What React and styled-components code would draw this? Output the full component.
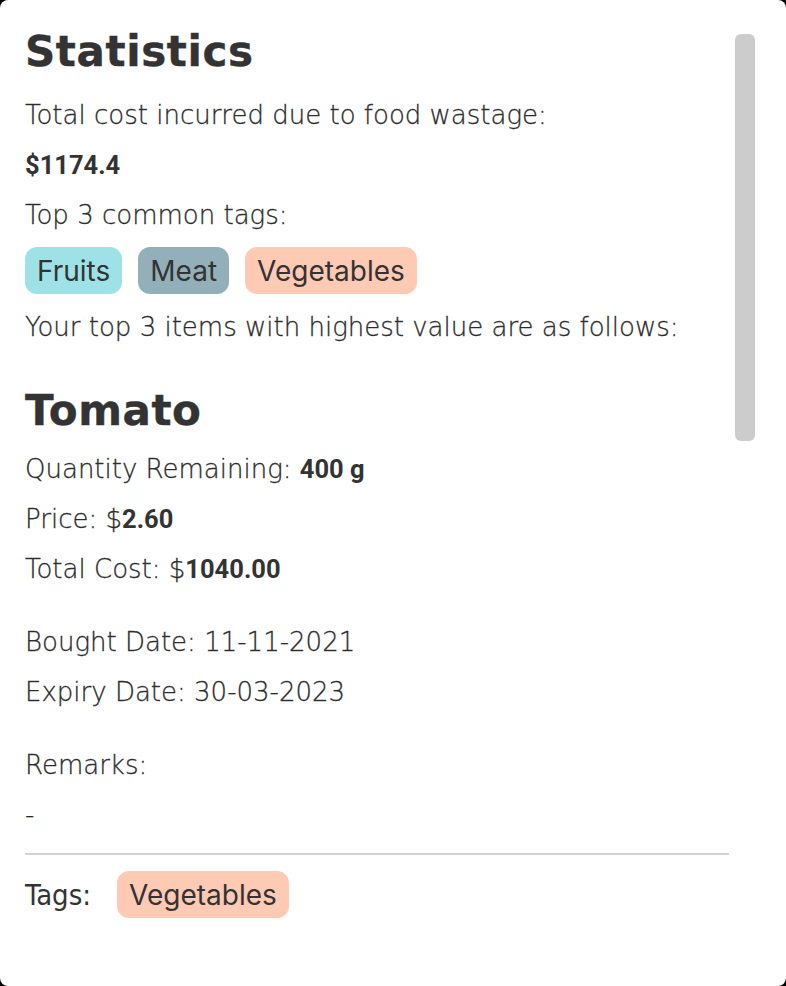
import React from 'react'
import styled, { createGlobalStyle } from 'styled-components'

const GlobalStyle = createGlobalStyle`
  html, body {
    margin: 0;
    padding: 0;
    background: #000;
  }
  * { box-sizing: border-box; }
`

const tagColors = {
  Fruits: '#9ee2e8',
  Meat: '#93b0ba',
  Vegetables: '#ffcab3',
}

const topItem = {
  name: 'Tomato',
  quantity: '400 g',
  price: '2.60',
  total: '1040.00',
  bought: '11-11-2021',
  expiry: '30-03-2023',
  remarks: '-',
  tags: ['Vegetables'],
}

const Item = ({ item }) => (
  <ItemBlock>
    <Heading tight>{item.name}</Heading>
    <Line>Quantity Remaining: <Value>{item.quantity}</Value></Line>
    <Line>Price: $<Value>{item.price}</Value></Line>
    <Line>Total Cost: $<Value>{item.total}</Value></Line>
    <Group>
      <Line>Bought Date: {item.bought}</Line>
      <Line>Expiry Date: {item.expiry}</Line>
    </Group>
    <Group>
      <Line>Remarks:</Line>
      <Line>{item.remarks}</Line>
    </Group>
    <Divider />
    <TagRow>
      <TagLabel>Tags:</TagLabel>
      {item.tags.map((t) => (
        <Tag key={t} color={tagColors[t]}>{t}</Tag>
      ))}
    </TagRow>
  </ItemBlock>
)

const App = () => {
  return (
    <>
      <GlobalStyle />
      <Panel>
        <Content>
          <Heading>Statistics</Heading>
          <Line>Total cost incurred due to food wastage:</Line>
          <Line><Value>$1174.4</Value></Line>
          <Line>Top 3 common tags:</Line>
          <Tags>
            <Tag color={tagColors.Fruits}>Fruits</Tag>
            <Tag color={tagColors.Meat}>Meat</Tag>
            <Tag color={tagColors.Vegetables}>Vegetables</Tag>
          </Tags>
          <Line>Your top 3 items with highest value are as follows:</Line>
          <Item item={topItem} />
        </Content>
        <ScrollThumb />
      </Panel>
    </>
  )
}

export default App

const Panel = styled.div`
  position: relative;
  height: 986px;
  width: 786px;
  background: #fff;
  border-radius: 8px;
  overflow: hidden;
`
const ScrollThumb = styled.div`
  position: absolute;
  top: 34px;
  right: 31px;
  width: 20px;
  height: 407px;
  background: #cccccc;
  border-radius: 6px;
`
const Content = styled.div`
  width: 729px;
  padding: 20px 0 0 25px;
  color: #2a2a2a;
  font-family: "DejaVu Sans", sans-serif;
  font-weight: 200;
  -webkit-text-stroke: 0.3px #333;
`
const Heading = styled.h1`
  margin: 0 0 ${(p) => (p.tight ? '1px' : '6px')} 0;
  font-size: 42px;
  line-height: 64px;
  font-weight: 700;
  letter-spacing: 0.6px;
  color: #333;
  -webkit-text-stroke: 0.4px #333;
`
const Line = styled.div`
  font-size: 26px;
  line-height: 50px;
  height: 50px;
  white-space: nowrap;
`
const Value = styled.b`
  font-family: Roboto, sans-serif;
  font-weight: 700;
  font-size: 25.5px;
  line-height: 1;
  color: #333;
  -webkit-text-stroke: 0;
`
const Tags = styled.div`
  display: flex;
  gap: 16px;
  margin: 7px 0 8px 0;
`
const Tag = styled.span`
  display: inline-flex;
  align-items: center;
  height: 47px;
  padding: 0 12px;
  border-radius: 12px;
  background: ${(p) => p.color};
  font-family: Inter, sans-serif;
  font-weight: 400;
  font-size: 28px;
  color: #333;
  -webkit-text-stroke: 0;
`
const ItemBlock = styled.div`
  margin-top: 27px;
`
const Group = styled.div`
  margin-top: 23px;
`
const Divider = styled.hr`
  margin: 13px 0 16px 0;
  border: none;
  border-top: 2px solid #d3d3d3;
`
const TagRow = styled.div`
  display: flex;
  align-items: center;
  gap: 26px;
`
const TagLabel = styled.span`
  font-family: "Liberation Sans Narrow", "DejaVu Sans Condensed", sans-serif;
  font-weight: 400;
  font-size: 29px;
  -webkit-text-stroke: 0;
  color: #333;
`
